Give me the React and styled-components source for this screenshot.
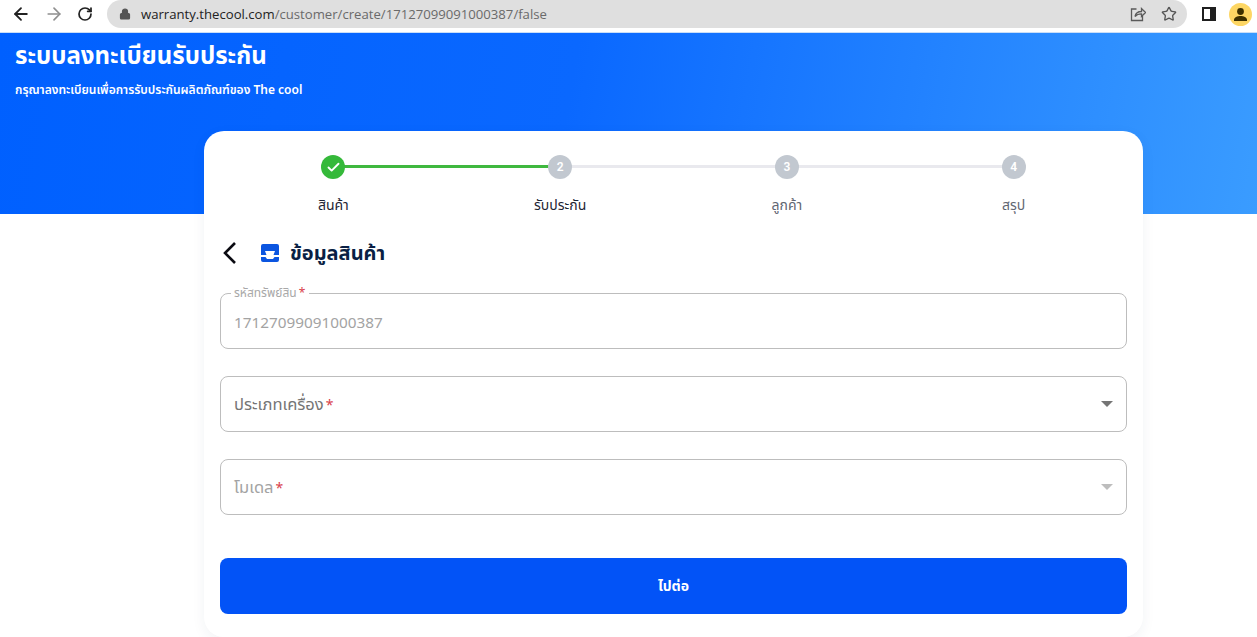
import React from "react";
import styled, { createGlobalStyle } from "styled-components";
import { ArrowLeft, ArrowRight, RotateCw, Lock, Star, Check } from "lucide-react";

const GlobalStyle = createGlobalStyle`
  html, body {
    margin: 0;
    padding: 0;
    height: 637px;
    overflow: hidden;
    background: #fff;
    font-family: "Noto Sans", "Noto Sans Thai", "Liberation Sans", sans-serif;
  }
  * { box-sizing: border-box; }
`;

const BrowserBar = styled.div`
  height: 33px;
  display: flex;
  align-items: flex-start;
  background: #fff;
  border-bottom: 1px solid #c9def8;
`;

const NavIcons = styled.div`
  width: 107px;
  height: 28px;
  padding-left: 11px;
  display: flex;
  align-items: center;
  gap: 13px;
`;

const AddressPill = styled.div`
  width: 1080px;
  height: 28px;
  padding: 0 10px 0 12px;
  display: flex;
  align-items: center;
  background: #dfdfdf;
  border-radius: 14px;
`;

const Url = styled.div`
  margin-left: 10px;
  flex: 1;
  font-family: "Open Sans", sans-serif;
  font-size: 13.15px;
  color: #6a6a6a;
  white-space: nowrap;

  b {
    font-weight: 400;
    color: #222;
  }
`;

const PillActions = styled.div`
  display: flex;
  align-items: center;
  gap: 15px;
  color: #5a5a5a;
`;

const BarEnd = styled.div`
  flex: 1;
  height: 28px;
  padding-left: 15px;
  display: flex;
  align-items: center;
  gap: 13px;
`;

const Hero = styled.header`
  height: 181px;
  padding: 7px 15px;
  color: #fff;
  background: linear-gradient(100deg, #0060ff 0%, #0a68ff 45%, #3a9cff 100%);
`;

const HeroTitle = styled.h1`
  margin: 0;
  font-size: 24px;
  line-height: 30px;
  font-weight: 700;
`;

const HeroSub = styled.p`
  margin: 11px 0 0;
  font-size: 12px;
  line-height: 18px;
  font-weight: 600;
`;

const Card = styled.main`
  position: relative;
  width: 939px;
  height: 506px;
  margin: -83px 0 0 204px;
  padding: 24px 16px 0;
  background: #fff;
  border-radius: 20px;
  box-shadow: 0 4px 14px rgba(30, 50, 90, 0.06);
`;

const Stepper = styled.div`
  display: grid;
  grid-template-columns: repeat(4, 1fr);
`;

const Step = styled.div`
  position: relative;
  display: flex;
  flex-direction: column;
  align-items: center;

  &:not(:last-child)::after {
    content: "";
    position: absolute;
    top: 10px;
    left: 50%;
    width: 100%;
    height: 3px;
    background: ${(p) => (p.$done ? "#3fb83f" : "#e9e9ee")};
  }
`;

const StepDot = styled.div`
  position: relative;
  z-index: 1;
  width: 24px;
  height: 24px;
  display: flex;
  align-items: center;
  justify-content: center;
  border-radius: 50%;
  color: #fff;
  font-size: 12px;
  font-weight: 600;
  font-family: "Roboto", sans-serif;
  background: ${(p) => (p.$done ? "#35b93a" : "#c2c8d0")};
`;

const StepLabel = styled.div`
  margin-top: 15px;
  font-size: 14px;
  line-height: 22px;
  color: ${(p) => (p.$active ? "#1d2433" : "#5f6672")};
`;

const TitleRow = styled.div`
  height: 24px;
  margin-top: 25px;
  display: flex;
  align-items: center;
`;

const BackButton = styled.div`
  width: 41px;
  display: flex;
  align-items: center;
`;

const SectionTitle = styled.h2`
  margin: 0 0 0 11px;
  font-size: 20px;
  line-height: 24px;
  font-weight: 700;
  color: #0a1f44;
`;

const Field = styled.fieldset`
  height: 61px;
  margin: 23px 0 0;
  padding: 0 13px;
  border: 1px solid #bdbdbd;
  border-radius: 8px;
  min-width: 0;
`;

const Legend = styled.legend`
  padding: 0 4px 0 3px;
  margin-left: -3px;
  font-size: 12px;
  line-height: 10px;
  color: #a8a8a8;
`;

const Req = styled.span`
  color: #d9414b;
  margin-left: 2px;
  font-size: ${(p) => p.$size || 12}px;
`;

const FieldValue = styled.div`
  height: 45px;
  padding-top: 3px;
  display: flex;
  align-items: center;
  font-size: 15.3px;
  color: #a3a3a3;
`;

const SelectBox = styled.div`
  height: 56px;
  margin-top: 27px;
  padding: 0 13px;
  display: flex;
  align-items: center;
  justify-content: space-between;
  border: 1px solid #bdbdbd;
  border-radius: 8px;
  font-size: 16.5px;
  color: ${(p) => (p.$muted ? "#a3a3a3" : "#757575")};
`;

const Caret = styled.span`
  width: 0;
  height: 0;
  border-left: 6px solid transparent;
  border-right: 6px solid transparent;
  border-top: 6px solid ${(p) => (p.$muted ? "#bdbdbd" : "#757575")};
`;

const NextButton = styled.button`
  display: block;
  width: 100%;
  height: 56px;
  margin-top: 43px;
  border: 0;
  border-radius: 8px;
  background: #0253f7;
  color: #fff;
  font-family: inherit;
  font-size: 14px;
  font-weight: 700;
`;

const steps = [
  { n: 1, label: "สินค้า", done: true, active: true },
  { n: 2, label: "รับประกัน", active: true },
  { n: 3, label: "ลูกค้า" },
  { n: 4, label: "สรุป" },
];

const ShareIcon = () => (
  <svg width="16" height="16" viewBox="0 0 16 16" fill="none" stroke="#5a5a5a" strokeWidth="1.3">
    <path d="M6.5 3H1.5v11.5h11V10" />
    <path d="M5 10.5c.6-3 3-5 6.5-5V2.5l4 4-4 4V7.8c-2.8 0-4.9.8-6.5 2.7z" />
  </svg>
);

const PanelIcon = () => (
  <svg width="14" height="14" viewBox="0 0 14 14">
    <rect width="14" height="14" fill="#1f1f1f" />
    <rect x="2" y="2" width="6" height="10" fill="#fff" />
  </svg>
);

const Avatar = () => (
  <svg width="23" height="23" viewBox="0 0 23 23">
    <circle cx="11.5" cy="11.5" r="11.5" fill="#fdd663" />
    <circle cx="11.5" cy="8.5" r="3.4" fill="#3c3000" />
    <path d="M5 17c0-2.7 3.4-4 6.5-4s6.5 1.3 6.5 4v1H5z" fill="#3c3000" />
  </svg>
);

const BackChevron = () => (
  <svg width="16" height="24" viewBox="0 0 16 24" fill="none" stroke="#0b0b12" strokeWidth="2.6">
    <path d="M15 2 5 12l10 10" />
  </svg>
);

const InboxIcon = () => (
  <svg width="18" height="18" viewBox="0 0 18 18">
    <path
      fill="#0b55e0"
      d="M2 0h14a2 2 0 0 1 2 2v9h-5.5l1.5-4H4l1.5 4H0V2a2 2 0 0 1 2-2z"
    />
    <path
      fill="#0b55e0"
      d="M0 13h4.5l1.5 2h6l1.5-2H18v3a2 2 0 0 1-2 2H2a2 2 0 0 1-2-2z"
    />
  </svg>
);

export default function App() {
  return (
    <>
      <GlobalStyle />
      <BrowserBar>
        <NavIcons>
          <ArrowLeft size={20} color="#222" strokeWidth={2.2} />
          <ArrowRight size={20} color="#8f8f8f" strokeWidth={2} />
          <RotateCw size={16} color="#222" strokeWidth={2.6} />
        </NavIcons>
        <AddressPill>
          <Lock size={12} color="#555" fill="#555" strokeWidth={2.4} />
          <Url>
            <b>warranty.thecool.com</b>/customer/create/17127099091000387/false
          </Url>
          <PillActions>
            <ShareIcon />
            <Star size={16} color="#555" strokeWidth={2} />
          </PillActions>
        </AddressPill>
        <BarEnd>
          <PanelIcon />
          <Avatar />
        </BarEnd>
      </BrowserBar>

      <Hero>
        <HeroTitle>ระบบลงทะเบียนรับประกัน</HeroTitle>
        <HeroSub>กรุณาลงทะเบียนเพื่อการรับประกันผลิตภัณฑ์ของ The cool</HeroSub>
      </Hero>

      <Card>
        <Stepper>
          {steps.map((s) => (
            <Step key={s.n} $done={s.done}>
              <StepDot $done={s.done}>
                {s.done ? <Check size={15} strokeWidth={3} /> : s.n}
              </StepDot>
              <StepLabel $active={s.active}>{s.label}</StepLabel>
            </Step>
          ))}
        </Stepper>

        <TitleRow>
          <BackButton>
            <BackChevron />
          </BackButton>
          <InboxIcon />
          <SectionTitle>ข้อมูลสินค้า</SectionTitle>
        </TitleRow>

        <Field>
          <Legend>
            รหัสทรัพย์สิน<Req>*</Req>
          </Legend>
          <FieldValue>17127099091000387</FieldValue>
        </Field>

        <SelectBox>
          <span>
            ประเภทเครื่อง<Req $size={14}>*</Req>
          </span>
          <Caret />
        </SelectBox>

        <SelectBox $muted>
          <span>
            โมเดล<Req $size={14}>*</Req>
          </span>
          <Caret $muted />
        </SelectBox>

        <NextButton>ไปต่อ</NextButton>
      </Card>
    </>
  );
}
